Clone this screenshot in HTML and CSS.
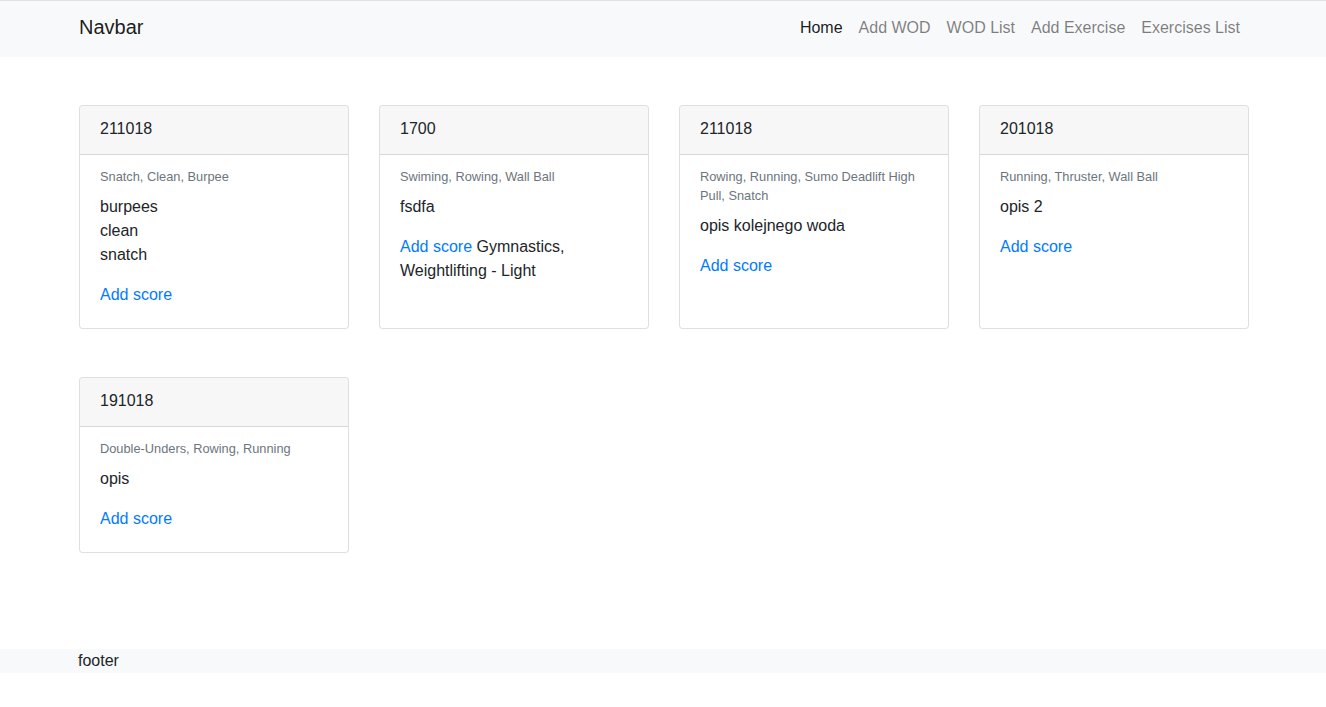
FILE: index.html
```html
<!DOCTYPE html>
<html lang="en">
<head>
<meta charset="utf-8">
<title>WOD</title>
<link rel="stylesheet" href="styles.css">
</head>
<body>
<nav class="navbar">
  <div class="container nav-inner">
    <a class="brand" href="#">Navbar</a>
    <ul class="nav-links">
      <li><a class="nav-link active" href="#">Home</a></li>
      <li><a class="nav-link" href="#">Add WOD</a></li>
      <li><a class="nav-link" href="#">WOD List</a></li>
      <li><a class="nav-link" href="#">Add Exercise</a></li>
      <li><a class="nav-link" href="#">Exercises List</a></li>
    </ul>
  </div>
</nav>

<main class="container main">
  <div class="cards">
    <div class="card">
      <div class="card-header">211018</div>
      <div class="card-body">
        <h6 class="card-subtitle">Snatch, Clean, Burpee</h6>
        <p class="card-text">burpees<br>clean<br>snatch</p>
        <p class="card-last"><a class="card-link" href="#">Add score</a></p>
      </div>
    </div>
    <div class="card">
      <div class="card-header">1700</div>
      <div class="card-body">
        <h6 class="card-subtitle">Swiming, Rowing, Wall Ball</h6>
        <p class="card-text">fsdfa</p>
        <p class="card-last"><a class="card-link" href="#">Add score</a> Gymnastics, Weightlifting - Light</p>
      </div>
    </div>
    <div class="card">
      <div class="card-header">211018</div>
      <div class="card-body">
        <h6 class="card-subtitle">Rowing, Running, Sumo Deadlift High Pull, Snatch</h6>
        <p class="card-text">opis kolejnego woda</p>
        <p class="card-last"><a class="card-link" href="#">Add score</a></p>
      </div>
    </div>
    <div class="card">
      <div class="card-header">201018</div>
      <div class="card-body">
        <h6 class="card-subtitle">Running, Thruster, Wall Ball</h6>
        <p class="card-text">opis 2</p>
        <p class="card-last"><a class="card-link" href="#">Add score</a></p>
      </div>
    </div>
    <div class="card">
      <div class="card-header">191018</div>
      <div class="card-body">
        <h6 class="card-subtitle">Double-Unders, Rowing, Running</h6>
        <p class="card-text">opis</p>
        <p class="card-last"><a class="card-link" href="#">Add score</a></p>
      </div>
    </div>
  </div>
</main>

<footer class="footer">
  <div class="container">footer</div>
</footer>
</body>
</html>
```

FILE: styles.css
```css
* { box-sizing: border-box; }

html, body {
  margin: 0;
  padding: 0;
}

body {
  font-family: "Liberation Sans", Arial, Helvetica, sans-serif;
  font-size: 16px;
  line-height: 1.5;
  color: #212529;
  background: #fff;
}

a { text-decoration: none; }

.container {
  width: 1170px;
  margin: 0 auto;
}

.navbar {
  background: #f8f9fa;
  border-top: 1px solid #dfe1e3;
  padding: 7px 0 9px;
}

.nav-inner {
  display: flex;
  align-items: center;
  justify-content: space-between;
}

.brand {
  font-size: 20px;
  line-height: 30px;
  padding: 4px 0 6px;
  color: rgba(0, 0, 0, 0.9);
  margin-left: 1px;
}

.nav-links {
  display: flex;
  list-style: none;
  margin: 0;
  padding: 0;
}

.nav-link {
  display: block;
  padding: 8px;
  line-height: 24px;
  color: rgba(0, 0, 0, 0.5);
}

.nav-link.active { color: rgba(0, 0, 0, 0.9); }

.main {
  margin-top: 48px;
  margin-bottom: 96px;
}

.cards {
  display: grid;
  grid-template-columns: repeat(4, 270px);
  column-gap: 30px;
  row-gap: 48px;
  padding-left: 1px;
}

.card {
  display: flex;
  flex-direction: column;
  border: 1px solid rgba(0, 0, 0, 0.125);
  border-radius: 4px;
  background: #fff;
}

.card-header {
  padding: 11px 20px 13px;
  background: rgba(0, 0, 0, 0.03);
  border-bottom: 1px solid rgba(0, 0, 0, 0.125);
  border-radius: 3px 3px 0 0;
}

.card-body {
  flex: 1;
  padding: 20px 20px 21px;
}

.card-subtitle {
  margin: -8px 0 9px;
  font-size: 12.8px;
  font-weight: 400;
  line-height: 19.2px;
  color: #6c757d;
}

.card-text {
  margin: 0 0 16px;
}

.card-last {
  margin: 0;
}

.card-link { color: #007bff; }

.footer {
  background: #f8f9fa;
  line-height: 24px;
}
```
